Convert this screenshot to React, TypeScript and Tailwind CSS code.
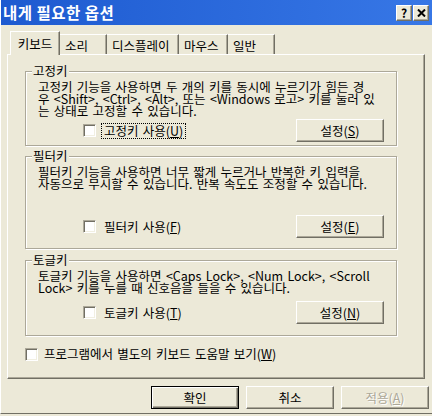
import React from 'react'

const raised =
  'border border-t-white border-l-white border-r-[#716F64] border-b-[#716F64] shadow-[inset_-1px_-1px_0_#ACA899]'

function Mn({ children }: { children: React.ReactNode }) {
  return <span className="underline underline-offset-[1px]">{children}</span>
}

function CheckBox() {
  return (
    <span className="inline-block shrink-0 w-[13px] h-[13px] bg-white border border-t-[#ACA899] border-l-[#ACA899] border-r-white border-b-white shadow-[inset_1px_1px_0_#716F64,inset_-1px_-1px_0_#F1EFE2]" />
  )
}

function Button({ children, isDefault, disabled }: { children: React.ReactNode; isDefault?: boolean; disabled?: boolean }) {
  const base = isDefault
    ? 'border border-black shadow-[inset_1px_1px_0_#fff,inset_-1px_-1px_0_#716F64,inset_-2px_-2px_0_#ACA899]'
    : raised
  return (
    <button
      className={`w-[88px] h-[23px] flex items-center justify-center bg-[#ECE9D8] text-[12.5px] leading-[12px] ${base} ${
        disabled ? 'text-[#ACA899] [text-shadow:1px_1px_0_#fff]' : 'text-black'
      }`}
    >
      {children}
    </button>
  )
}

function Group({
  title,
  lines,
  check,
  setting,
  height,
  gap,
}: {
  title: string
  lines: string[]
  check: React.ReactNode
  setting: React.ReactNode
  height: string
  gap: string
}) {
  return (
    <div className={`relative ml-[17px] w-[372px] ${height} border border-[#ACA899] shadow-[inset_1px_1px_0_#fff,1px_1px_0_#fff]`}>
      <div className="absolute left-[6px] top-[-7px] px-[1px] bg-[#ECE9D8] leading-[12px]">{title}</div>
      <div className="pl-[12px] pt-[9px] leading-[12px]">
        {lines.map((l, i) => (
          <div key={i} className="whitespace-nowrap">
            {l}
          </div>
        ))}
      </div>
      <div className={`flex items-center pr-[12px] ${gap}`}>
        <div className="flex items-center ml-[57px] gap-[5px]">
          <CheckBox />
          {check}
        </div>
        <div className="ml-auto">
          <Button>{setting}</Button>
        </div>
      </div>
    </div>
  )
}

const tabs = [
  { label: '키보드', w: 'w-[50px]' },
  { label: '소리', w: 'w-[47px]' },
  { label: '디스플레이', w: 'w-[72px]' },
  { label: '마우스', w: 'w-[49px]' },
  { label: '일반', w: 'w-[47px]' },
]

export default function App() {
  return (
    <div
      className="w-[432px] h-[416px] overflow-hidden bg-[#ECE9D8] text-black text-[12.5px] [word-spacing:1.5px]"
      style={{ fontFamily: '"Noto Sans CJK KR", "Noto Sans", sans-serif' }}
    >
      <div className="h-[414px] border-l border-l-white border-b border-b-[#716F64]">
        {/* title bar */}
        <div className="h-[25px] flex items-center bg-gradient-to-r from-[#1d5ad0] to-[#3777e6] pl-[2px] pr-[3px]">
          <span className="text-white font-bold text-[15.5px] leading-[15px] tracking-[0.5px] [word-spacing:0px]">내게 필요한 옵션</span>
          <div className="ml-auto flex gap-[1px]">
            <span className={`w-[16px] h-[16px] flex items-center justify-center bg-[#ECE9D8] text-[12px] font-bold leading-none ${raised}`}>?</span>
            <span className={`w-[16px] h-[16px] flex items-center justify-center bg-[#ECE9D8] ${raised}`}>
              <svg width="9" height="8" viewBox="0 0 9 8">
                <path d="M1 0.5 L8 7.5 M8 0.5 L1 7.5" stroke="#000" strokeWidth="2" />
              </svg>
            </span>
          </div>
        </div>

        {/* tabs */}
        <div className="relative z-10 mt-[6px] ml-[9px] h-[24px] flex items-end leading-[12px]">
          {tabs.map((t, i) =>
            i === 0 ? (
              <div
                key={t.label}
                className={`${t.w} h-[24px] flex items-start justify-center pt-[6px] bg-[#ECE9D8] border-t border-l border-r border-t-white border-l-white border-r-[#716F64] shadow-[inset_-1px_0_0_#ACA899]`}
              >
                {t.label}
              </div>
            ) : (
              <div
                key={t.label}
                className={`${t.w} h-[20px] mb-[1px] pl-[5px] pt-[5px] whitespace-nowrap bg-[#ECE9D8] border-t border-r border-t-white border-r-[#716F64] shadow-[inset_-1px_0_0_#ACA899]`}
              >
                {t.label}
              </div>
            )
          )}
        </div>

        {/* panel */}
        <div className={`relative mt-[-1px] ml-[6px] w-[418px] h-[325px] bg-[#ECE9D8] ${raised}`}>
          <div className="pt-[16px]">
            <Group
              title="고정키"
              height="h-[75px]"
              gap="mt-[2px]"
              lines={[
                '고정키 기능을 사용하면 두 개의 키를 동시에 누르기가 힘든 경',
                '우 <Shift>, <Ctrl>, <Alt>, 또는 <Windows 로고> 키를 눌러 있',
                '는 상태로 고정할 수 있습니다.',
              ]}
              check={
                <span className="px-[2px] border border-dotted border-black leading-[14px]">
                  고정키 사용(<Mn>U</Mn>)
                </span>
              }
              setting={
                <>
                  설정(<Mn>S</Mn>)
                </>
              }
            />
            <div className="mt-[10px]">
              <Group
                title="필터키"
                height="h-[93px]"
                gap="mt-[25px]"
                lines={[
                  '필터키 기능을 사용하면 너무 짧게 누르거나 반복한 키 입력을',
                  '자동으로 무시할 수 있습니다. 반복 속도도 조정할 수 있습니다.',
                ]}
                check={
                  <span className="px-[3px] leading-[14px]">
                    필터키 사용(<Mn>F</Mn>)
                  </span>
                }
                setting={
                  <>
                    설정(<Mn>E</Mn>)
                  </>
                }
              />
            </div>
            <div className="mt-[11px]">
              <Group
                title="토글키"
                height="h-[76px]"
                gap="mt-[7px]"
                lines={[
                  '토글키 기능을 사용하면 <Caps Lock>, <Num Lock>, <Scroll',
                  'Lock> 키를 누를 때 신호음을 들을 수 있습니다.',
                ]}
                check={
                  <span className="px-[3px] leading-[14px]">
                    토글키 사용(<Mn>T</Mn>)
                  </span>
                }
                setting={
                  <>
                    설정(<Mn>N</Mn>)
                  </>
                }
              />
            </div>
            <div className="mt-[11px] ml-[17px] flex items-center gap-[6px] leading-[14px]">
              <CheckBox />
              <span>
                프로그램에서 별도의 키보드 도움말 보기(<Mn>W</Mn>)
              </span>
            </div>
          </div>
        </div>

        {/* dialog buttons */}
        <div className="mt-[7px] flex justify-end gap-[7px] pr-[3px]">
          <Button isDefault>확인</Button>
          <Button>취소</Button>
          <Button disabled>
            적용(<Mn>A</Mn>)
          </Button>
        </div>
      </div>
    </div>
  )
}
